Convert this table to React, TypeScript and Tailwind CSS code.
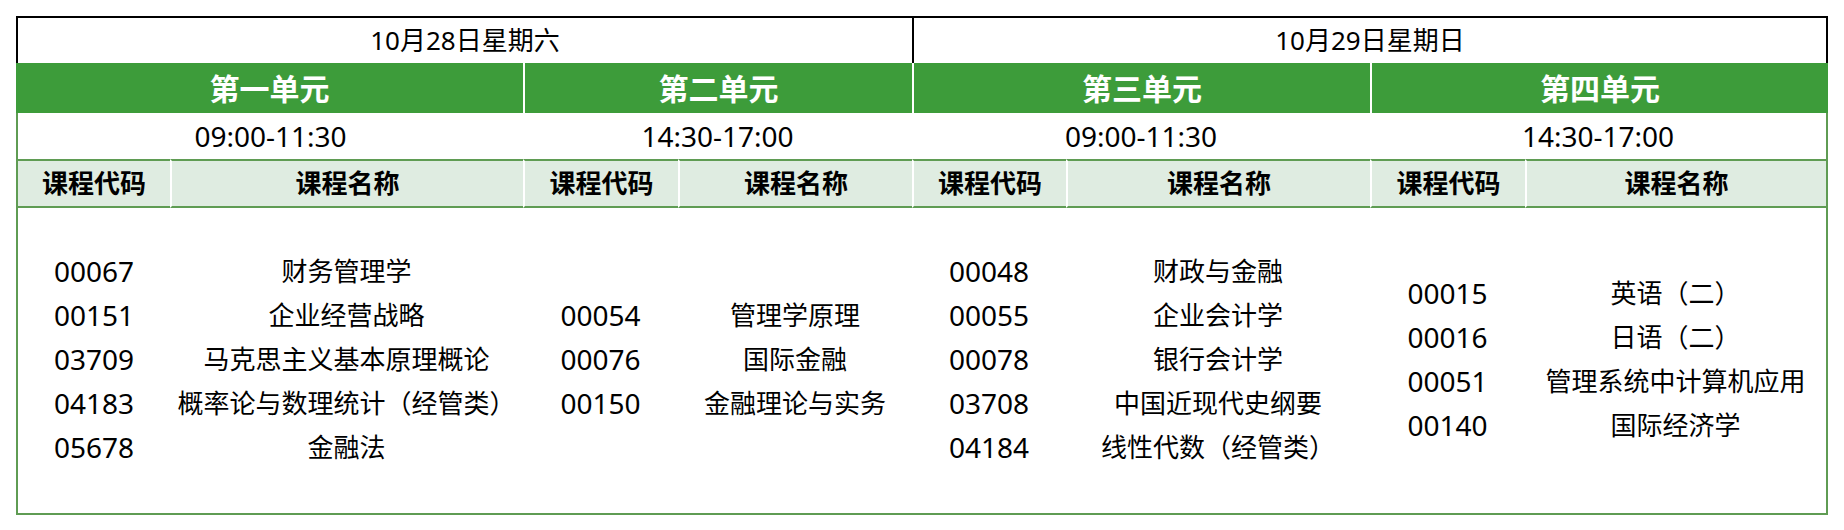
import React from 'react';

const font = { fontFamily: '"Noto Sans", "Noto Sans CJK SC", sans-serif' };

interface Course {
  code: string;
  name: string;
}

const units = [
  { title: '第一单元', time: '09:00-11:30' },
  { title: '第二单元', time: '14:30-17:00' },
  { title: '第三单元', time: '09:00-11:30' },
  { title: '第四单元', time: '14:30-17:00' },
];

const courses: Course[][] = [
  [
    { code: '00067', name: '财务管理学' },
    { code: '00151', name: '企业经营战略' },
    { code: '03709', name: '马克思主义基本原理概论' },
    { code: '04183', name: '概率论与数理统计（经管类）' },
    { code: '05678', name: '金融法' },
  ],
  [
    { code: '00054', name: '管理学原理' },
    { code: '00076', name: '国际金融' },
    { code: '00150', name: '金融理论与实务' },
  ],
  [
    { code: '00048', name: '财政与金融' },
    { code: '00055', name: '企业会计学' },
    { code: '00078', name: '银行会计学' },
    { code: '03708', name: '中国近现代史纲要' },
    { code: '04184', name: '线性代数（经管类）' },
  ],
  [
    { code: '00015', name: '英语（二）' },
    { code: '00016', name: '日语（二）' },
    { code: '00051', name: '管理系统中计算机应用' },
    { code: '00140', name: '国际经济学' },
  ],
];

function BodyColumn({ items, first, last, field }: { items: Course[]; first?: boolean; last?: boolean; field: 'code' | 'name' }) {
  return (
    <div
      className={`h-[307px] pb-[4px] flex flex-col items-center justify-center border-b-2 border-[#5f9c53] ${first ? 'border-l-2' : ''} ${last ? 'border-r-2' : ''}`}
    >
      {items.map(c => (
        <div
          key={c.code}
          className={`h-[44px] leading-[44px] whitespace-nowrap ${field === 'code' ? 'text-[28px]' : 'text-[26px]'}`}
        >
          {c[field]}
        </div>
      ))}
    </div>
  );
}

export default function App() {
  return (
    <div className="bg-white w-[1844px] h-[530px] pt-4 pl-4 text-[26px] text-black" style={font}>
      <div className="grid w-[1812px] grid-cols-[154px_353px_155px_234px_154px_304px_155px_303px]">
        {/* date row */}
        <div className="col-span-4 h-[47px] border-t-2 border-l-2 border-black flex items-center justify-center">
          10月28日星期六
        </div>
        <div className="col-span-4 h-[47px] border-t-2 border-x-2 border-black flex items-center justify-center">
          10月29日星期日
        </div>

        {/* unit titles */}
        {units.map((u, i) => (
          <div
            key={u.title}
            className={`col-span-2 h-[50px] bg-[#3d9c3a] text-white font-bold text-[30px] flex items-center justify-center ${i > 0 ? 'border-l-2 border-white' : ''}`}
          >
            {u.title}
          </div>
        ))}

        {/* times */}
        {units.map((u, i) => (
          <div
            key={u.title + 't'}
            className={`col-span-2 h-[46px] text-[28px] flex items-center justify-center border-[#5f9c53] ${i === 0 ? 'border-l-2' : ''} ${i === 3 ? 'border-r-2' : ''}`}
          >
            {u.time}
          </div>
        ))}

        {/* column headers */}
        {units.map((u, i) => (
          <React.Fragment key={u.title + 'h'}>
            <div
              className={`h-[49px] bg-[#dfece1] border-y-2 border-[#5f9c53] font-bold flex items-center justify-center ${i === 0 ? 'border-l-2' : 'border-l-2 border-l-white'}`}
            >
              课程代码
            </div>
            <div
              className={`h-[49px] bg-[#dfece1] border-y-2 border-[#5f9c53] border-l-2 border-l-white font-bold flex items-center justify-center ${i === 3 ? 'border-r-2' : ''}`}
            >
              课程名称
            </div>
          </React.Fragment>
        ))}

        {/* course lists */}
        {courses.map((list, i) => (
          <React.Fragment key={i}>
            <BodyColumn items={list} field="code" first={i === 0} />
            <BodyColumn items={list} field="name" last={i === 3} />
          </React.Fragment>
        ))}
      </div>
    </div>
  );
}
